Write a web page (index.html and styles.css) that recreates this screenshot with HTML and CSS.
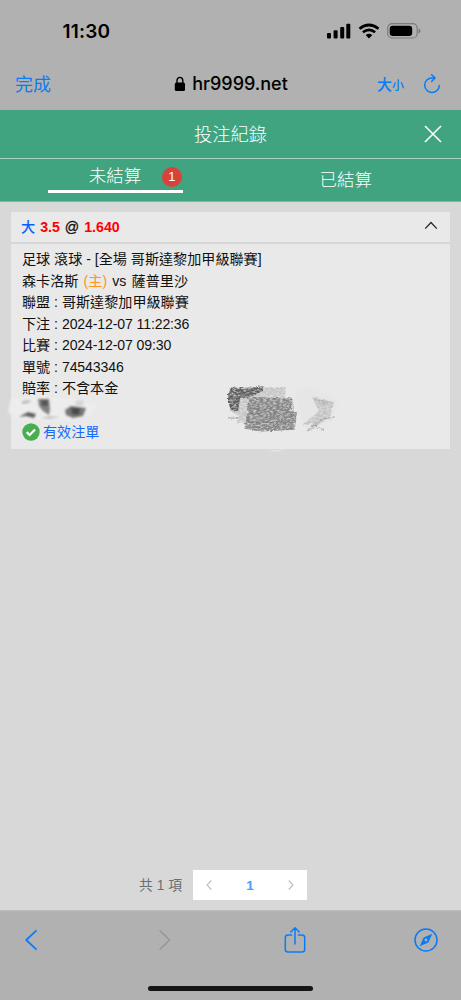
FILE: index.html
```html
<!DOCTYPE html>
<html lang="zh-Hant">
<head>
<meta charset="utf-8">
<title>投注紀錄</title>
<link rel="stylesheet" href="styles.css">
</head>
<body>
<div class="phone">
  <header class="status">
    <span class="time">11:30</span>
    <svg class="status-icons" width="96" height="18" viewBox="0 0 96 18">
      <rect x="1" y="11" width="4" height="5.5" rx="1"/><rect x="7.6" y="8.3" width="4" height="8.2" rx="1"/><rect x="14.2" y="5" width="4" height="11.5" rx="1"/><rect x="20.3" y="1.8" width="4" height="14.7" rx="1"/>
      <path d="M33.5 6.8Q43 -.8 52.5 6.8" fill="none" stroke="#000" stroke-width="2.7"/>
      <path d="M36.9 10.3Q43 5.3 49.1 10.3" fill="none" stroke="#000" stroke-width="2.6"/>
      <path d="M39.7 13.1Q43 10.4 46.3 13.1L43 16.4Z"/>
      <rect x="61.7" y="1.7" width="29.5" height="14.3" rx="4.5" fill="none" stroke="#7c7c7c" stroke-width="1.2"/>
      <rect x="63.7" y="3.8" width="22.5" height="10.2" rx="3"/>
      <path d="M92.5 6.4Q94.6 7 94.6 8.9T92.5 11.4Z" fill="#7c7c7c"/>
    </svg>
  </header>
  <nav class="address">
    <span class="done">完成</span>
    <div class="site">
      <svg width="12" height="16" viewBox="0 0 12 16"><rect x=".8" y="6.5" width="10.2" height="8.5" rx="1.5"/><path d="M3 7V4.6a2.9 3.2 0 0 1 5.8 0V7" fill="none" stroke="#000" stroke-width="1.4"/></svg>
      <span>hr9999.net</span>
    </div>
    <div class="tools">
      <span class="size">大<small>小</small></span>
      <svg width="18" height="22" viewBox="0 0 18 22" fill="none" stroke="#087cf8" stroke-width="1.5" stroke-linecap="round" stroke-linejoin="round"><path d="M11.5 4.9H9A7.3 7.3 0 1 0 16.3 12.4M8.6 1.7L12 4.9L8.6 8.5"/></svg>
    </div>
  </nav>
  <div class="title">
    <h1>投注紀錄</h1>
    <svg class="close" width="18" height="18" viewBox="0 0 18 18"><path d="M1 1L17 17M17 1L1 17" stroke="#fff" stroke-width="1.6"/></svg>
  </div>
  <div class="tabs">
    <div class="tab active"><div class="tab-label"><span>未結算</span><b class="badge">1</b></div></div>
    <div class="tab"><span>已結算</span></div>
  </div>
  <main class="content">
    <section class="card">
      <div class="card-head">
        <p><span class="blue">大</span> <span class="red">3.5</span> <span class="at">@</span> <span class="red">1.640</span></p>
        <svg width="14" height="9" viewBox="0 0 14 9"><path d="M1.2 7.7L7 1.5L12.8 7.7" fill="none" stroke="#222" stroke-width="1.2"/></svg>
      </div>
      <div class="card-body">
        <p>足球 滾球 - [全場 哥斯達黎加甲級聯賽]</p>
        <p class="teams">森卡洛斯 <span class="orange">(主)</span> vs 薩普里沙</p>
        <p>聯盟 : 哥斯達黎加甲級聯賽</p>
        <p>下注 : <span class="num">2024-12-07 11:22:36</span></p>
        <p>比賽 : <span class="num">2024-12-07 09:30</span></p>
        <p>單號 : <span class="num">74543346</span></p>
        <p>賠率 : 不含本金</p>
        <div class="hidden-row"></div>
        <div class="valid">
          <svg width="18" height="18" viewBox="0 0 18 18"><circle cx="9" cy="9" r="8.7" fill="#49ae50"/><path d="M4.7 9.2L7.6 12L13.1 6.5" fill="none" stroke="#fff" stroke-width="2.3"/></svg>
          <span>有效注單</span>
        </div>
      </div>
      <svg class="scribble" width="439" height="100" viewBox="11 360 439 100">
        <defs>
          <filter id="grain" x="-10%" y="-10%" width="120%" height="120%">
            <feTurbulence type="fractalNoise" baseFrequency=".3 .6" numOctaves="3" seed="4" result="n"/>
            <feDisplacementMap in="SourceGraphic" in2="n" scale="3" xChannelSelector="R" yChannelSelector="G" result="d"/>
            <feColorMatrix in="n" type="matrix" values="0 0 0 0 0  0 0 0 0 0  0 0 0 0 0  1.8 0 0 0 -.1" result="m"/>
            <feComposite in="d" in2="m" operator="in"/>
            <feGaussianBlur stdDeviation=".45"/>
          </filter>
          <filter id="soft" x="-20%" y="-20%" width="140%" height="140%">
            <feGaussianBlur stdDeviation=".9"/>
          </filter>
        </defs>
        <path d="M11 399L42 397L76 399L98 405L91 415L69 421L18 420L8 412Z" fill="#ededed" filter="url(#soft)"/>
        <g filter="url(#soft)">
          <path d="M22 401L31 400L29 403L22 404Z" fill="#bbb"/>
          <path d="M38 399L49 399L50 409L49 415L43 411L39 406Z" fill="#808080"/>
          <path d="M41 400H48V406H42Z" fill="#555"/>
          <path d="M19 417L28 412L36 414L34 418L26 416Z" fill="#606060"/>
          <path d="M40 418L49 416L60 417L50 419Z" fill="#c8c8c8"/>
          <path d="M65 410L71 406L86 408L83 416L73 418L66 415Z" fill="#777"/>
          <path d="M71 408L80 408L79 415L72 414Z" fill="#484848"/>
          <path d="M75 401L84 400L83 406L76 406Z" fill="#d6d6d6"/>
        </g>
        <g filter="url(#grain)">
          <path d="M232 388L286 387L285 398L293 400L296 420L295 430L262 431L245 428L244 422L237 424L239 416L230 411L229 397Z" fill="#aaa" opacity=".55"/>
          <path d="M231 388H252L263 386V391L250 397L240 399L238 411L231 410L228 402V394Z" fill="#5c5c5c"/>
          <path d="M249 398L292 399V410L297 413L296 421L294 429L261 431L245 427L247 413Z" fill="#858585"/>
          <path d="M231 388H257M228 395L262 398L293 399M247 409L290 410M248 414L297 413M246 423L294 422M244 428L262 431L295 429M228 418H239" stroke="#777" stroke-width="1" fill="none"/>
        </g>
        <path d="M295 391L310 387L338 400L331 420L307 431L300 417Z" fill="#e6e6e6" filter="url(#soft)"/>
        <g filter="url(#grain)">
          <path d="M312 397L334 402L330 417L321 423L308 432L313 422L302 426L319 411Z" fill="#c4c4c4"/>
          <path d="M313 398L334 403L322 405Z" fill="#b0b0b0"/>
          <path d="M307 431L323 419L335 417M315 426L324 430" stroke="#999" fill="none"/>
        </g>
        <path d="M267 451L285 449L277 452Z" fill="#e2e2e2"/>
      </svg>
    </section>
    <div class="pagination">
      <span>共 1 項</span>
      <div class="pager">
        <svg width="8" height="12" viewBox="0 0 8 12"><path d="M6.3 1.5L2 6L6.3 10.5"/></svg>
        <b>1</b>
        <svg width="8" height="12" viewBox="0 0 8 12"><path d="M1.7 1.5L6 6L1.7 10.5"/></svg>
      </div>
    </div>
  </main>
  <footer class="toolbar">
    <div class="actions">
      <svg width="14" height="22" viewBox="0 0 14 22"><path d="M12 1.8L2.2 11L12 20.2" stroke="#087cf8" stroke-width="1.8"/></svg>
      <svg width="14" height="22" viewBox="0 0 14 22"><path d="M2 1.8L11.5 11L2 20.2" stroke="#979797" stroke-width="1.5"/></svg>
      <svg width="22" height="28" viewBox="0 0 22 28" stroke="#087cf8" stroke-width="1.5"><path d="M7.5 9H4Q1.3 9 1.3 11.5V23.5Q1.3 26 4 26H18Q20.7 26 20.7 23.5V11.5Q20.7 9 18 9H14.5M11 18V2M6.8 6L11 1.8L15.2 6"/></svg>
      <svg width="24" height="24" viewBox="0 0 24 24"><circle cx="12" cy="12" r="11" stroke="#087cf8" stroke-width="1.5"/><path fill="#087cf8" fill-rule="evenodd" d="M18.3 5.7L14.4 14.4L5.700 18.300L9.600 9.600ZM12 10.600A1.400 1.400 0 1 0 12 13.400A1.400 1.400 0 1 0 12 10.600Z"/></svg>
    </div>
    <div class="home"></div>
  </footer>
</div>
</body>
</html>
```
FILE: styles.css
```css
* { box-sizing: border-box; }
body { margin: 0; background: #b1b1b1; font-family: "Liberation Sans", "Noto Sans CJK TC", sans-serif; color: #111; }
h1, p { margin: 0; }
h1 { font-weight: 300; }
svg { display: block; flex: none; }
.phone { width: 461px; height: 1000px; display: flex; flex-direction: column; overflow: hidden; }
.status { height: 60px; padding: 2px 39px 0 62.5px; display: flex; align-items: center; justify-content: space-between; font: 600 19px Inter, sans-serif; color: #000; }
.time { letter-spacing: .2px; }
.address { height: 50px; padding: 0 20px 2px 15px; display: grid; grid-template-columns: 100px 1fr 100px; align-items: center; color: #087cf8; }
.done { font-size: 18px; padding-bottom: 2px; }
.site { display: flex; align-items: center; justify-content: center; gap: 6px; font: 500 18px Inter, sans-serif; color: #000; padding-left: 6px; }
.site span { padding-bottom: 2px; }
.tools { display: flex; align-items: center; justify-content: flex-end; gap: 19px; }
.size { font-size: 15px; font-weight: 500; white-space: nowrap; padding-bottom: 2px; }
.size small { font-size: 12px; }
.title { height: 49px; background: #40a481; border-bottom: 1px solid #a9d4c4; color: #fff; display: grid; grid-template-columns: 60px 1fr 60px; align-items: center; }
.title h1 { grid-column: 2; text-align: center; font-size: 18.3px; padding-bottom: 3px; }
.close { margin-left: 23px; margin-bottom: 1px; }
.tabs { height: 43px; background: #40a481; border-bottom: 1px solid #78bca3; display: grid; grid-template-columns: 1fr 1fr; color: #fff; font-size: 17.5px; font-weight: 300; }
.tab { display: flex; justify-content: center; align-items: center; padding-bottom: 3px; }
.tab.active { align-items: flex-start; padding-bottom: 0; }
.tab-label { width: 135px; height: 34px; border-bottom: 3px solid #fff; display: grid; grid-template-columns: 21px 53px 21px; gap: 0 20px; align-items: center; }
.tab-label span { grid-column: 2; white-space: nowrap; }
.badge { width: 20px; height: 20px; margin-top: 4px; border-radius: 50%; background: #da413b; font-size: 13px; font-weight: 400; display: flex; align-items: center; justify-content: center; }
.content { height: 708px; background: #d8d8d8; padding: 10px 11px 0; display: flex; flex-direction: column; justify-content: space-between; }
.card { position: relative; height: 237px; background: #e9e9e9; font-size: 14.1px; }
.card-head { height: 32px; border-bottom: 2px solid #d6d6d6; padding: 0 12px 3px 10px; display: flex; align-items: center; justify-content: space-between; font-size: 14.2px; font-weight: 700; }
.card-head .blue { font-weight: 500; }
.card-head .at { font-weight: 400; -webkit-text-stroke: .3px #111; }
.card-head p { word-spacing: 1px; }
.blue { color: #095eff; }
.red { color: #f00; }
.orange { color: #ff9421; }
.card-body { padding: 5px 11px 0; }
.card-body p { height: 21.5px; line-height: 21.5px; white-space: nowrap; }
.teams { word-spacing: 1.3px; }
.num { letter-spacing: -.13px; }
.hidden-row { height: 21px; }
.valid { height: 22px; display: flex; align-items: center; gap: 3px; color: #146aff; }
.valid span { padding-bottom: 2px; }
.scribble { position: absolute; left: 0; top: 148px; overflow: visible; }
.pagination { height: 40px; margin-right: 15px; padding-bottom: 10px; display: flex; align-items: center; justify-content: center; gap: 11px; font-size: 13.8px; color: #6c6e70; }
.pagination > span { padding-bottom: 3px; }
.pager { width: 114px; height: 30px; background: #fff; padding: 0 12px; display: flex; align-items: center; justify-content: space-between; }
.pager path { fill: none; stroke: #bec1c6; stroke-width: 1.2; }
.pager b { font-size: 13.5px; color: #409eff; }
.toolbar { height: 90px; border-top: 1px solid #bdbdbd; display: flex; flex-direction: column; align-items: center; justify-content: space-between; padding-bottom: 9px; }
.actions { width: 461px; height: 58px; padding: 0 23px 0 24px; display: flex; align-items: center; }
.actions svg { fill: none; stroke-linecap: round; stroke-linejoin: round; }
.actions svg:nth-child(2) { margin-left: 120px; }
.actions svg:nth-child(3) { margin-left: 112px; margin-right: auto; }
.home { width: 165px; height: 5px; background: #151515; border-radius: 3px; }
```
